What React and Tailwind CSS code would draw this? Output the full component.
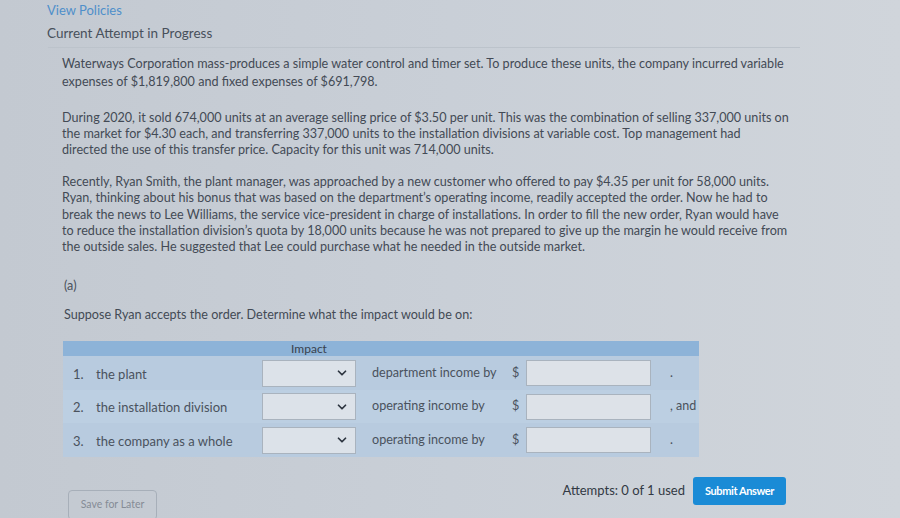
import { ChevronDown } from "lucide-react";

const rows = [
  { n: "1.", label: "the plant", mid: "department income by", end: "." },
  { n: "2.", label: "the installation division", mid: "operating income by", end: ", and" },
  { n: "3.", label: "the company as a whole", mid: "operating income by", end: "." },
];

function Para({ lines, className = "" }) {
  return (
    <p className={"text-[12.6px] text-[#434a55] " + className}>
      {lines.map((l, i) => (
        <span key={i} className="block whitespace-nowrap">
          {l}
        </span>
      ))}
    </p>
  );
}

export default function App() {
  return (
    <div
      className="w-[900px] h-[518px] overflow-hidden bg-gradient-to-r from-[#c3c9d1] via-[#c9cfd7] to-[#d0d5db]"
      style={{ fontFamily: "Lato, 'Open Sans', sans-serif" }}
    >
      <div className="pl-[47px] pt-[2px]">
        <div className="text-[13px] leading-[16px] text-[#4f8fca]">View Policies</div>
        <div className="mt-[7px] text-[13.5px] leading-[16px] text-[#48505b]">Current Attempt in Progress</div>
      </div>

      <div className="ml-[48px] mt-[6px] w-[752px] border-t border-[#bcc3cb] pl-[14px] pt-[7px]">
        <Para
          className="leading-[17.5px]"
          lines={[
            "Waterways Corporation mass-produces a simple water control and timer set. To produce these units, the company incurred variable",
            "expenses of $1,819,800 and fixed expenses of $691,798.",
          ]}
        />
        <Para
          className="mt-[20px] leading-[16px]"
          lines={[
            "During 2020, it sold 674,000 units at an average selling price of $3.50 per unit. This was the combination of selling 337,000 units on",
            "the market for $4.30 each, and transferring 337,000 units to the installation divisions at variable cost. Top management had",
            "directed the use of this transfer price. Capacity for this unit was 714,000 units.",
          ]}
        />
        <Para
          className="mt-[16px] leading-[16.3px]"
          lines={[
            "Recently, Ryan Smith, the plant manager, was approached by a new customer who offered to pay $4.35 per unit for 58,000 units.",
            "Ryan, thinking about his bonus that was based on the department\u2019s operating income, readily accepted the order. Now he had to",
            "break the news to Lee Williams, the service vice-president in charge of installations. In order to fill the new order, Ryan would have",
            "to reduce the installation division\u2019s quota by 18,000 units because he was not prepared to give up the margin he would receive from",
            "the outside sales. He suggested that Lee could purchase what he needed in the outside market.",
          ]}
        />

        <div className="mt-[23px] pl-[2px] text-[12.6px] leading-[16px] text-[#4a515c]">(a)</div>
        <div className="mt-[13px] pl-[2px] text-[12.6px] leading-[16px] text-[#434a55]">
          Suppose Ryan accepts the order. Determine what the impact would be on:
        </div>

        <div className="mt-[18px] ml-[1px] w-[636px]">
          <div className="flex h-[15px] bg-[#8db3d8] text-[12px] leading-[15px] text-[#38414d]">
            <div className="w-[199px]" />
            <div className="w-[94px] text-center">Impact</div>
          </div>
          {rows.map((r, i) => (
            <div
              key={i}
              className={
                "flex h-[33.5px] items-center text-[#4a525d] " +
                (i === 1 ? "bg-[#bccfe2]" : "bg-[#b8cbdf]")
              }
            >
              <div className="flex w-[199px] pl-[10px] pt-[3px] text-[13px]">
                <span className="w-[23px]">{r.n}</span>
                <span>{r.label}</span>
              </div>
              <div className="flex h-[27px] w-[94px] items-center justify-end border border-[#a9b3be] bg-[#dce2e9] pr-[6px]">
                <ChevronDown size={14} strokeWidth={3} className="text-[#2d3540]" />
              </div>
              <div className="w-[156px] pl-[16px] text-[12.6px]">{r.mid}</div>
              <div className="w-[14px] text-[12.6px] text-[#4a525d]">$</div>
              <div className="h-[26px] w-[125px] border border-[#a9b3be] bg-[#dde2e8]" />
              <div className="flex-1 pl-[19px] text-[12.5px]">{r.end}</div>
            </div>
          ))}
        </div>

        <div className="mt-[20px] flex items-start">
          <div className="mt-[13px] ml-[6px] flex h-[30px] w-[89px] items-center justify-center rounded-sm border border-[#a7afb9] text-[10.5px] text-[#858c96]">
            Save for Later
          </div>
          <div className="ml-auto mr-[14px] flex items-center">
            <span className="text-[13px] text-[#323943]">Attempts: 0 of 1 used</span>
            <div className="ml-[8px] flex h-[28px] w-[93px] items-center justify-center rounded-[3px] bg-[#1a8bd6] text-[11px] font-bold tracking-[-0.4px] text-white">
              Submit Answer
            </div>
          </div>
        </div>
      </div>
    </div>
  );
}
